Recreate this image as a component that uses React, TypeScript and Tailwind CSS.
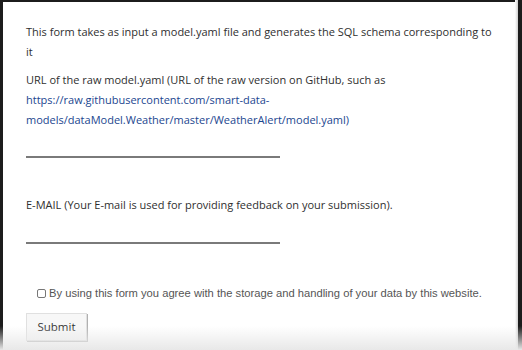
import React from "react";

export default function App() {
  return (
    <div className="relative w-[522px] h-[350px] overflow-hidden bg-white">
      <div className="absolute inset-0 border-l-[3px] border-t-2 border-r-[4px] border-[#1c1c1c] pointer-events-none" />
      <div className="absolute top-0 bottom-0 right-[4px] w-[3px] bg-gradient-to-r from-white to-[#d0d0d0] pointer-events-none" />
      <div className="absolute left-0 right-0 bottom-0 h-[24px] bg-gradient-to-b from-white/0 to-[#e8e8e8] pointer-events-none" />
      <div
        className="pl-[26px] pr-[26px] pt-[22px] text-[11px] text-[#2f2f2f] leading-[20px]"
        style={{ fontFamily: '"Open Sans", sans-serif' }}
      >
        <p>
          This form takes as input a model.yaml file and generates the SQL schema corresponding to it
        </p>
        <p className="mt-[8px]">
          URL of the raw model.yaml (URL of the raw version on GitHub, such as{" "}
          <span className="text-[#1b468f]">
            https://raw.githubusercontent.com/smart-data-models/dataModel.Weather/master/WeatherAlert/model.yaml)
          </span>
        </p>
        <div className="mt-[26px] w-[254px] h-[2px] bg-[#7a7a7a]" />
        <p className="mt-[37px]">E-MAIL (Your E-mail is used for providing feedback on your submission).</p>
        <div className="mt-[27px] w-[254px] h-[2px] bg-[#7a7a7a]" />
        <div
          className="mt-[39px] ml-[11px] h-[20px] flex items-center gap-[3px] text-[11.2px] text-[#555]"
          style={{ fontFamily: '"Liberation Sans", Arial, sans-serif' }}
        >
          <span className="inline-block w-[9px] h-[9px] border border-[#777] rounded-[2px] bg-white" />
          <span className="whitespace-nowrap">By using this form you agree with the storage and handling of your data by this website.</span>
        </div>
        <button className="mt-[10px] w-[61px] h-[28px] bg-[#f7f7f7] border border-[#e0e0e0] shadow-[1px_1px_0_#b0b0b0] text-[11.5px] text-[#333]">
          Submit
        </button>
      </div>
    </div>
  );
}
